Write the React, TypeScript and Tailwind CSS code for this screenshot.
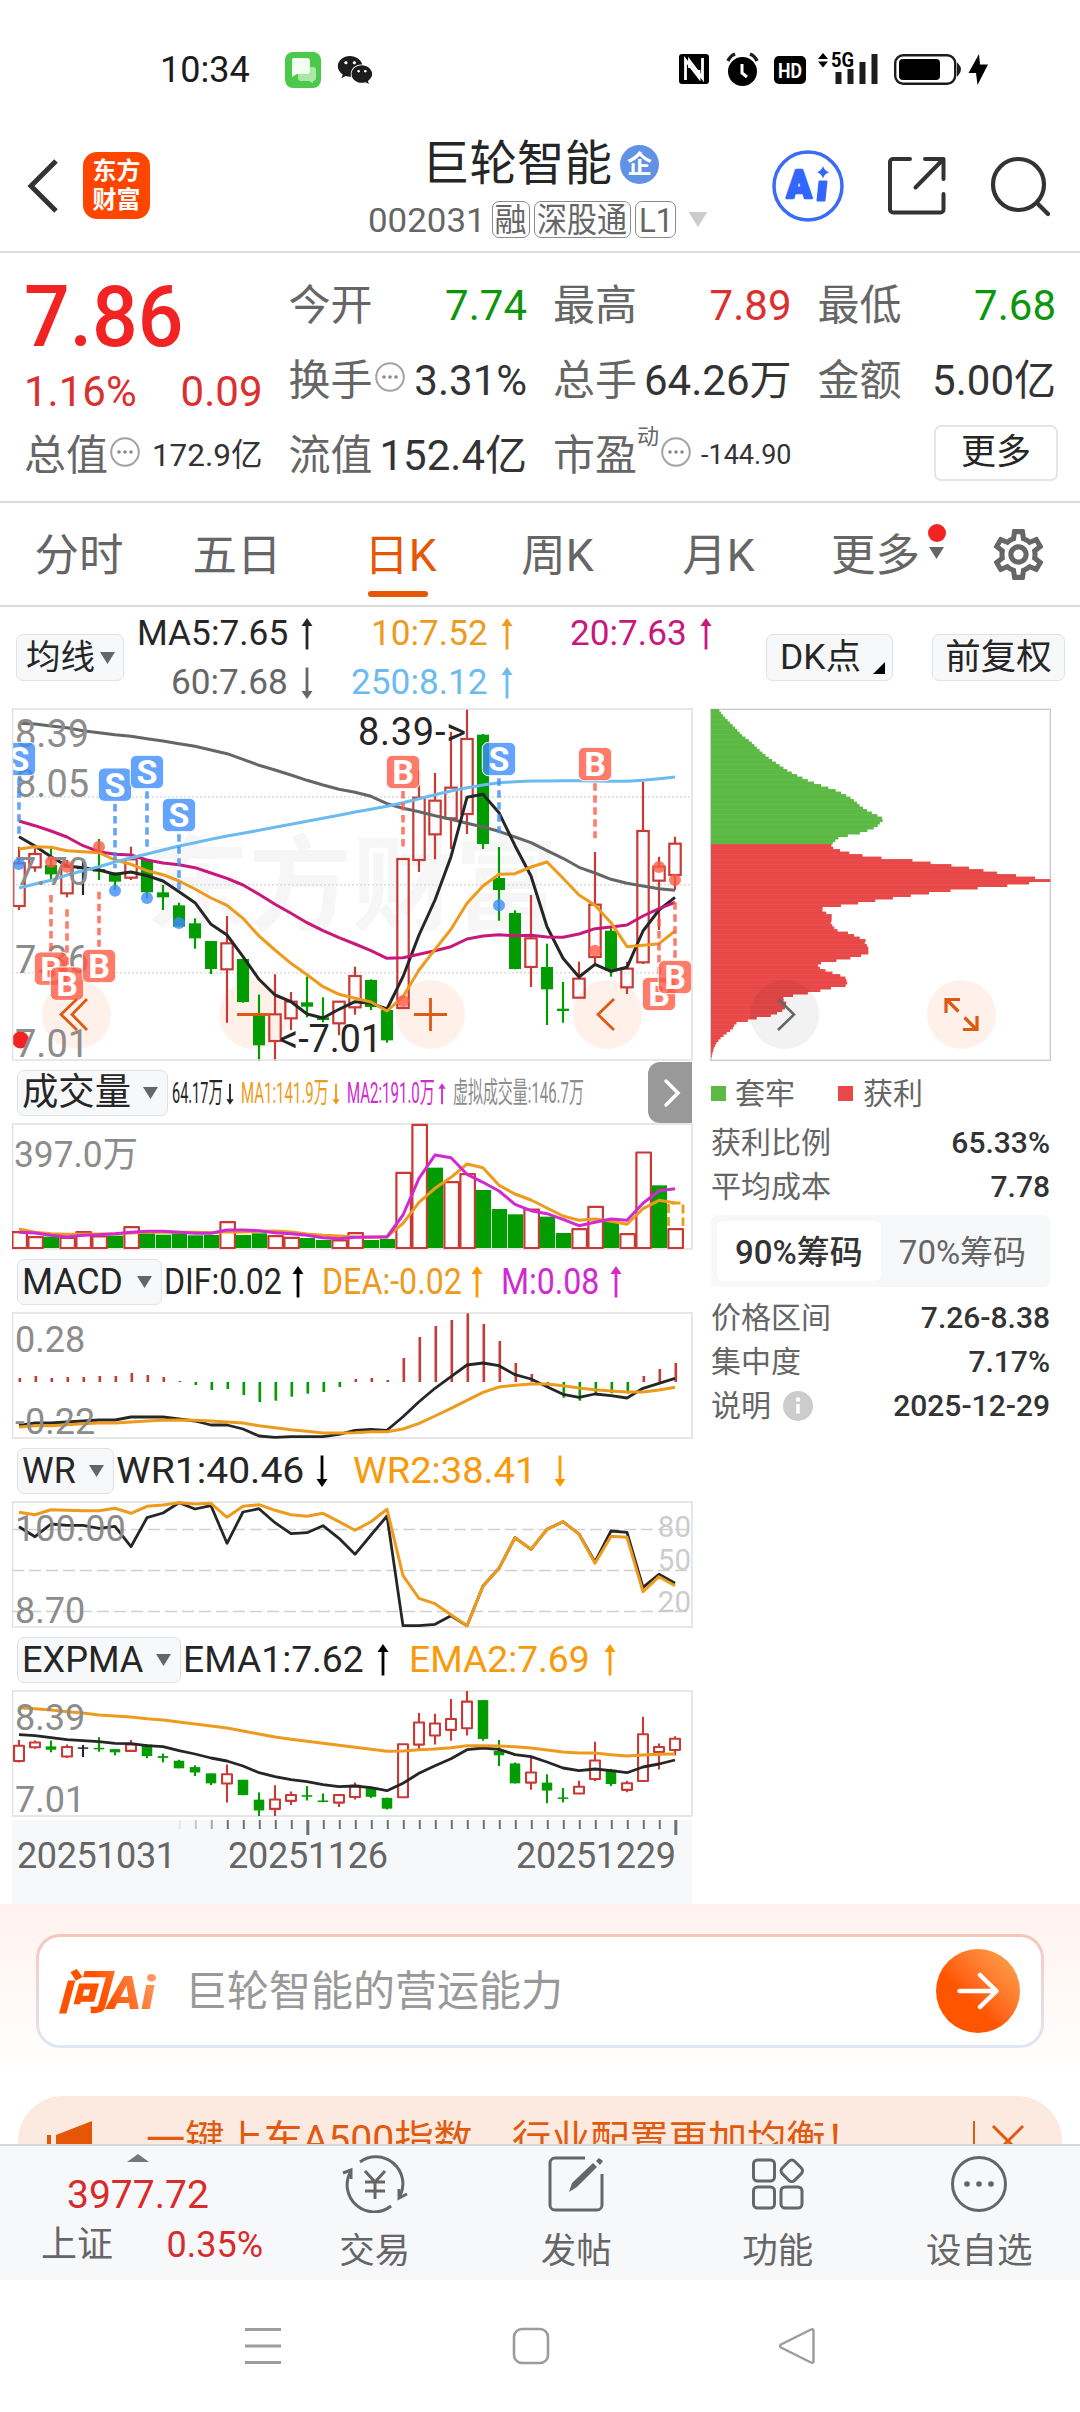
import React, { useLayoutEffect, useRef, useState } from "react";
import { FaWeixin } from "react-icons/fa";
import { MdOutlineSettings } from "react-icons/md";

const FONT = "font-[Roboto,'Noto_Sans_CJK_SC',sans-serif]";

const xs = (i: number) => 19 + i * 16;
const line = (ys: number[], map: (y: number) => number) =>
  ys.map((y, i) => `${xs(i)},${map(y).toFixed(1)}`).join(" ");

/* [colour, high, low, bodyTop, bodyBottom], in thirds of a pixel from y = 700 */
type Candle = [string, number, number, number, number];
const candles: Candle[] = [
  ["R", 440, 630, 490, 618], ["R", 445, 515, 462, 502], ["G", 445, 545, 495, 523], ["R", 480, 592, 500, 580],
  ["K", 483, 585, 503, 507], ["G", 417, 540, 507, 515], ["G", 518, 570, 518, 545], ["R", 440, 540, 478, 533],
  ["G", 480, 595, 480, 577], ["G", 555, 630, 577, 592], ["G", 608, 680, 616, 680], ["G", 655, 746, 670, 715],
  ["G", 723, 822, 723, 807], ["R", 648, 968, 730, 808], ["G", 777, 908, 777, 906], ["G", 884, 1083, 945, 1036],
  ["R", 823, 1083, 943, 1023], ["R", 876, 990, 905, 955], ["G", 830, 952, 907, 920], ["G", 892, 967, 952, 960],
  ["R", 903, 1006, 905, 970], ["R", 800, 944, 828, 922], ["G", 838, 930, 840, 921], ["G", 928, 1028, 930, 1021],
  ["R", 475, 925, 477, 924], ["R", 212, 516, 293, 480], ["R", 219, 478, 302, 403], ["R", 95, 447, 263, 355],
  ["R", 27, 402, 117, 342], ["G", 102, 447, 104, 432], ["G", 441, 662, 534, 570], ["G", 631, 808, 639, 807],
  ["R", 585, 861, 715, 801], ["G", 731, 975, 801, 868], ["G", 846, 968, 926, 933], ["R", 785, 893, 836, 893],
  ["R", 456, 790, 614, 771], ["G", 685, 830, 692, 813], ["R", 785, 882, 806, 862], ["R", 245, 792, 393, 787],
  ["R", 470, 690, 500, 542], ["R", 410, 570, 431, 525],
];
const ma5 = [410, 438, 470, 498, 503, 510, 523, 516, 527, 543, 575, 608, 673, 705, 770, 838, 885, 905, 942, 954, 928, 905, 910, 927, 830, 705, 600, 470, 292, 283, 338, 437, 528, 680, 775, 831, 793, 814, 802, 693, 630, 592];
const ma10 = [447, 440, 442, 452, 455, 458, 480, 493, 512, 524, 543, 567, 594, 616, 655, 708, 750, 790, 824, 860, 883, 895, 906, 933, 890, 810, 748, 688, 610, 558, 523, 521, 501, 486, 535, 585, 616, 668, 740, 736, 731, 693];
const ma20 = [363, 377, 393, 411, 437, 455, 463, 465, 480, 489, 494, 503, 519, 535, 555, 583, 613, 640, 668, 692, 713, 732, 752, 775, 773, 763, 752, 740, 717, 708, 704, 707, 706, 711, 712, 702, 686, 681, 675, 648, 626, 607];
const ma60 = [70, 72, 78, 83, 92, 98, 104, 109, 116, 123, 131, 139, 150, 161, 178, 196, 210, 225, 241, 255, 268, 277, 289, 311, 325, 335, 347, 358, 370, 381, 394, 411, 428, 452, 475, 502, 519, 538, 550, 558, 566, 571];
const ma250 = [564, 552, 541, 525, 512, 500, 486, 473, 462, 450, 438, 428, 418, 408, 400, 391, 382, 373, 364, 355, 346, 336, 328, 319, 308, 296, 284, 273, 263, 255, 248, 245, 243, 243, 242, 242, 243, 244, 244, 241, 236, 231];

const volTop = [515, 530, 530, 532, 515, 528, 527, 500, 520, 524, 520, 526, 525, 485, 525, 520, 527, 532, 534, 540, 540, 518, 540, 537, 337, 193, 323, 365, 341, 390, 447, 463, 447, 470, 519, 506, 439, 486, 521, 276, 376, 506];
const volUp = "RRGRRRGRGGGGGRGGRRGGRRGGRRGRRGGGRGGRRGRRGR";
const vol1 = [507, 517, 521, 523, 523, 522, 522, 519, 516, 517, 517, 517, 518, 515, 516, 514, 513, 516, 522, 526, 528, 531, 532, 530, 490, 427, 385, 352, 312, 323, 376, 402, 420, 444, 468, 481, 477, 484, 493, 446, 421, 429];
const vol2 = [517, 519, 526, 531, 526, 524, 521, 517, 514, 514, 517, 520, 520, 510, 510, 512, 518, 521, 526, 533, 536, 532, 531, 531, 465, 355, 285, 293, 343, 367, 393, 433, 452, 461, 478, 497, 487, 477, 481, 430, 392, 386];
const macd = [954, 948, 954, 951, 951, 948, 948, 939, 945, 951, 963, 975, 990, 987, 1005, 1026, 1022, 1010, 1001, 996, 981, 957, 954, 960, 894, 831, 798, 780, 760, 792, 843, 909, 942, 981, 1013, 1022, 1000, 1000, 1000, 948, 927, 909];
const dif = [1096, 1089, 1089, 1086, 1083, 1080, 1080, 1071, 1071, 1071, 1077, 1083, 1095, 1095, 1107, 1128, 1132, 1130, 1130, 1130, 1123, 1111, 1108, 1111, 1070, 1025, 985, 950, 915, 909, 917, 944, 957, 980, 1003, 1012, 1002, 1007, 1014, 985, 970, 955];
const dea = [1101, 1097, 1097, 1094, 1091, 1089, 1089, 1086, 1083, 1081, 1080, 1081, 1083, 1086, 1089, 1097, 1103, 1109, 1114, 1119, 1119, 1118, 1115, 1115, 1107, 1090, 1068, 1045, 1021, 997, 981, 976, 972, 972, 977, 984, 989, 993, 996, 996, 990, 982];
const wr1 = [260, 290, 252, 256, 256, 265, 259, 320, 233, 219, 188, 207, 197, 310, 216, 206, 248, 281, 278, 257, 295, 343, 285, 228, 557, 557, 553, 527, 557, 438, 385, 293, 328, 268, 245, 282, 366, 273, 277, 442, 403, 430];
const wr2 = [217, 224, 209, 211, 212, 212, 205, 220, 199, 195, 188, 192, 190, 232, 199, 194, 211, 224, 229, 220, 245, 271, 245, 208, 407, 475, 491, 524, 557, 438, 385, 293, 328, 268, 245, 282, 370, 289, 292, 455, 410, 437];
const ema1 = [884, 887, 893, 899, 902, 905, 910, 911, 917, 920, 932, 942, 954, 963, 978, 998, 1010, 1019, 1025, 1034, 1040, 1038, 1043, 1052, 1030, 1000, 977, 956, 929, 924, 928, 944, 950, 966, 984, 992, 987, 992, 998, 981, 972, 960];
const ema2 = [803, 806, 810, 815, 819, 825, 828, 831, 836, 840, 846, 852, 858, 864, 873, 882, 891, 898, 904, 910, 916, 922, 928, 934, 933, 929, 927, 923, 917, 917, 918, 920, 924, 930, 936, 939, 939, 944, 948, 945, 943, 942];

/* Cost distribution outline: [y, x] in thirds of a pixel from (690, 600) */
const chips: [number, number][] = [
  [327, 85], [345, 98], [365, 117], [385, 137], [405, 155], [425, 182], [445, 202], [465, 225], [480, 245], [500, 275], [515, 298],
  [530, 330], [545, 362], [560, 405], [572, 440], [590, 477], [605, 497], [620, 513], [635, 538], [645, 560], [652, 575], [660, 579],
  [668, 570], [680, 560], [690, 535], [698, 512], [705, 478], [712, 447], [720, 437], [732, 425], [740, 423], [747, 437], [757, 470],
  [765, 512], [772, 550], [778, 648], [786, 700], [794, 770], [802, 828], [810, 875], [818, 917], [826, 978], [833, 1032], [841, 1081],
  [849, 1013], [857, 943], [864, 857], [872, 771], [879, 713], [887, 655], [894, 605], [902, 549], [910, 494], [917, 446], [923, 398],
  [933, 397], [940, 412], [945, 425], [960, 425], [970, 422], [980, 430], [990, 438], [997, 470], [1005, 490], [1013, 508], [1020, 527],
  [1030, 524], [1040, 535], [1055, 535], [1062, 535], [1068, 502], [1077, 468], [1083, 425], [1090, 385], [1100, 383], [1108, 398],
  [1115, 418], [1122, 437], [1130, 465], [1145, 471], [1155, 473], [1163, 425], [1172, 387], [1180, 346], [1187, 303], [1195, 275],
  [1210, 290], [1228, 283], [1237, 265], [1247, 240], [1253, 202], [1262, 170], [1268, 140], [1275, 133], [1285, 128], [1300, 108],
  [1315, 90], [1330, 78], [1345, 71], [1372, 64], [1382, 62],
];
function chipAt(y: number) {
  for (let i = 1; i < chips.length; i++) {
    if (y <= chips[i][0]) {
      const [y0, x0] = chips[i - 1];
      const [y1, x1] = chips[i];
      return x0 + ((x1 - x0) * (y - y0)) / (y1 - y0);
    }
  }
  return 62;
}
const chipBars = Array.from({ length: 140 }, (_, i) => {
  const y = 331 + i * 7.5;
  return { y: 600 + (y - 3.75) / 3, x: 690 + chipAt(y) / 3, green: y < 732 };
});

const RED = "#c93a36";
const GREEN = "#009c00";
const INK = "#262626";
const ORANGE = "#ee9a1c";

/* Text drawn at a fixed width, condensed or widened to suit. */
function Fit({ w, children, className = "" }: { w: number; children: React.ReactNode; className?: string }) {
  const ref = useRef<HTMLSpanElement>(null);
  const [k, setK] = useState(1);
  useLayoutEffect(() => {
    if (ref.current) setK(w / ref.current.offsetWidth);
  }, [w]);
  return (
    <span className={`inline-block whitespace-nowrap ${className}`} style={{ width: w }}>
      <span ref={ref} className="inline-block origin-left" style={{ transform: `scaleX(${k})` }}>
        {children}
      </span>
    </span>
  );
}

function Arrow({ down = false, className = "" }: { down?: boolean; className?: string }) {
  return (
    <svg width="12" height="34" viewBox="0 0 12 34" className={`shrink-0 ${down ? "rotate-180" : ""} ${className}`}>
      <path d="M6 5V32.500" stroke="currentColor" strokeWidth="2.800" />
      <path d="M0.500 9L6 1L11.500 9Z" fill="currentColor" />
    </svg>
  );
}

function Caret({ className = "" }: { className?: string }) {
  return (
    <svg width="15" height="12" viewBox="0 0 15 12" className={className}>
      <path d="M0 0H15L7.500 12Z" fill="currentColor" />
    </svg>
  );
}

function MoreDots({ className = "" }: { className?: string }) {
  return (
    <svg width="30" height="30" viewBox="0 0 30 30" className={`shrink-0 ${className}`}>
      <circle cx="15" cy="15" r="13.800" fill="none" stroke="#a3a3a3" strokeWidth="2" />
      <g fill="#8a8a8a">
        <circle cx="9" cy="15" r="1.800" />
        <circle cx="15" cy="15" r="1.800" />
        <circle cx="21" cy="15" r="1.800" />
      </g>
    </svg>
  );
}

function StatusBar() {
  return (
    <div className="flex h-[140px] shrink-0 items-center pl-[160px] text-[#1c1c1c]">
      <span className="w-[125px] text-[36px] leading-none">10:34</span>
      <svg width="36" height="36" viewBox="0 0 36 36">
        <rect width="36" height="36" rx="8" fill="#4cc94a" />
        <path d="M13 15h15a3 3 0 0 1 3 3v8a3 3 0 0 1-3 3v2l-4-2h-8a3 3 0 0 1-3-3z" fill="#a9e8a6" />
        <path d="M8 6h14a3 3 0 0 1 3 3v10a3 3 0 0 1-3 3H12l-5 3V9a3 3 0 0 1 1-3z" fill="#f2fff0" />
      </svg>
      <FaWeixin className="ml-[16px] h-[38px] w-[36px]" />
      <svg width="310" height="36" viewBox="679 52 310 36" className="ml-[306px]">
        <rect x="679" y="54" width="30" height="30" rx="3" />
        <path d="M685.500 80V60L699 77.500V70" fill="none" stroke="#fff" strokeWidth="2.800" />
        <path d="M702.500 58V78L689.500 61V68" fill="none" stroke="#fff" strokeWidth="2.800" />
        <circle cx="742.500" cy="71.500" r="14.500" />
        <path d="M742 64v9l5 4" fill="none" stroke="#fff" strokeWidth="3" />
        <path d="M728 61q2-5 7-7M757 61q-2-5-7-7" fill="none" stroke="#1c1c1c" strokeWidth="3.500" />
        <rect x="774" y="56" width="32" height="28" rx="5" />
        <text x="790" y="77.500" textAnchor="middle" className="font-[Roboto]" fontSize="21" fontWeight="700" fill="#fff" textLength="24" lengthAdjust="spacingAndGlyphs">HD</text>
        <path d="M818 59l5-6 5 6zM818 61.500l5 6 5-6z" />
        <text x="831" y="67" className="font-[Roboto]" fontSize="20" fontWeight="700" textLength="23" lengthAdjust="spacingAndGlyphs">5G</text>
        <path d="M838.500 72V84M850.500 69V84M862.500 62V84M874.500 54V84" stroke="#1c1c1c" strokeWidth="6" />
        <rect x="895.200" y="55.200" width="60" height="28.500" rx="8" fill="none" stroke="#1c1c1c" strokeWidth="2.400" />
        <rect x="899" y="59" width="41" height="21" rx="4" />
        <path d="M958 65q4 4.500 0 9z" stroke="#1c1c1c" strokeWidth="2" />
        <path d="M979 54L968.500 73h7.500l1.500 12L988 64.500h-8z" />
      </svg>
    </div>
  );
}

function Header() {
  const tag = "flex h-[37px] items-center justify-center rounded-[7px] border-[1.500px] border-[#8a8a8a] leading-none";
  return (
    <div className="flex h-[113px] shrink-0 items-center border-b-2 border-[#dcdcdc] pr-[28px] pl-[27px]">
      <svg width="32" height="54" viewBox="0 0 32 54" className="-mt-[20px]">
        <path d="M29 2L4 27L29 52" fill="none" stroke="#333" strokeWidth="5" />
      </svg>
      <div className="-mt-[20px] ml-[24px] flex h-[67px] w-[67px] flex-col items-center justify-center rounded-[14px] bg-[#ff4500] text-[24px] leading-[29px] font-bold text-white">
        <span>东方</span>
        <span>财富</span>
      </div>
      <div className="ml-[218px] flex w-[341px] flex-col self-stretch">
        <div className="flex h-[48px] items-center pl-[54px] text-[47.500px] leading-none text-[#262626]">
          <span className="pt-[1px]">巨轮智能</span>
          <span className="ml-[8px] flex h-[39px] w-[39px] items-center justify-center rounded-full bg-[#6292e6] text-[25px] leading-none font-bold text-white">
            企
          </span>
        </div>
        <div className="mt-[12px] flex h-[39px] items-center text-[34px] leading-none text-[#666]">
          <Fit w={118}>002031</Fit>
          <span className={`${tag} ml-[6px] w-[38px] text-[32px]`}>融</span>
          <span className={`${tag} ml-[4px] w-[98px]`}><Fit w={90}>深股通</Fit></span>
          <span className={`${tag} ml-[4px] w-[41px]`}><Fit w={34}>L1</Fit></span>
          <Caret className="ml-[11px] h-[15px] w-[22px] text-[#ccc]" />
        </div>
      </div>
      <svg width="72" height="72" viewBox="0 0 72 72" className="-mt-[20px] ml-[63px]">
        <circle cx="36" cy="36" r="34" fill="none" stroke="#3a6cf4" strokeWidth="3.500" />
        <text x="14.500" y="47.500" className="font-[Roboto]" fontSize="38" fontWeight="900" fill="#3366ff" stroke="#3366ff" strokeWidth="2.500" strokeLinejoin="round" textLength="25" lengthAdjust="spacingAndGlyphs">A</text>
        <path d="M47.500 31.500H54.500L52.500 50.500H45.500Z" fill="#3366ff" stroke="#3366ff" strokeWidth="2" strokeLinejoin="round" />
        <path d="M51 16q1.500 5 6 6.200q-4.500 1.500-6 6.300q-1.500-5-6-6.300q4.500-1.400 6-6.200z" fill="#3366ff" />
      </svg>
      <svg width="60" height="60" viewBox="0 0 60 60" className="-mt-[19px] ml-[43px]" fill="none" stroke="#333" strokeWidth="4" strokeLinecap="round" strokeLinejoin="round">
        <path d="M23 3H6a3 3 0 0 0-3 3V53.500a3 3 0 0 0 3 3H53.500a3 3 0 0 0 3-3V38" />
        <path d="M38 3H56.500V23M56 3.500L28.500 31.500" />
      </svg>
      <svg width="62" height="62" viewBox="0 0 62 62" className="-mt-[18px] ml-[43px]" fill="none" stroke="#333" strokeWidth="4.200">
        <circle cx="28.500" cy="28.500" r="25.500" />
        <path d="M47 47L58 58" strokeLinecap="round" />
      </svg>
    </div>
  );
}

function Stat({ label, value, color = "text-[#333]", children }: { label: string; value: string; color?: string; children?: React.ReactNode }) {
  return (
    <div className="flex h-[75px] items-center">
      <span className="text-[#666]">{label}</span>
      {children}
      <span className={`ml-auto ${color}`}>{value}</span>
    </div>
  );
}

function Quote() {
  return (
    <div className="h-[250px] shrink-0 border-b-2 border-[#dcdcdc] pr-[24px] pl-[24px] pt-[15px] text-[42px] leading-none whitespace-nowrap">
      <div className="grid grid-cols-4 gap-x-[26px]">
        <div className="row-span-2 flex flex-col text-[#f12323]">
          <span className="mt-[7px] text-[85px] font-medium"><Fit w={160}>7.86</Fit></span>
          <span className="mt-[11px] flex justify-between text-[#dc3030]">
            <span>1.16%</span>
            <span>0.09</span>
          </span>
        </div>
        <Stat label="今开" value="7.74" color="text-[#0c960c]" />
        <Stat label="最高" value="7.89" color="text-[#dc3030]" />
        <Stat label="最低" value="7.68" color="text-[#0c960c]" />
        <Stat label="换手" value="3.31%"><MoreDots className="-mt-[7px] ml-[2px]" /></Stat>
        <Stat label="总手" value="64.26万" />
        <Stat label="金额" value="5.00亿" />
        <div className="flex h-[75px] items-center">
          <span className="text-[#666]">总值</span>
          <MoreDots className="-mt-[7px] ml-[2px]" />
          <span className="ml-auto text-[31.500px] text-[#333]">172.9亿</span>
        </div>
        <Stat label="流值" value="152.4亿" />
        <div className="flex h-[75px] items-center">
          <span className="text-[#666]">市盈</span>
          <span className="-mt-[38px] text-[22px] text-[#666]">动</span>
          <MoreDots className="-mt-[7px] ml-[2px]" />
          <span className="ml-auto text-[27px] text-[#333]">-144.90</span>
        </div>
        <div className="flex h-[75px] items-center justify-end">
          <span className="-mt-[6px] -mr-[2px] flex h-[56px] w-[124px] items-center justify-center rounded-[7px] border-2 border-[#e6e6e6] text-[35px] text-[#262626]">
            更多
          </span>
        </div>
      </div>
    </div>
  );
}

function Tabs() {
  return (
    <div className="flex h-[104px] shrink-0 items-center border-b-2 border-[#dcdcdc] text-[44.500px] leading-none whitespace-nowrap text-[#666]">
      <span className="mt-[5px] w-[158px] text-center">分时</span>
      <span className="mt-[5px] w-[158px] text-center">五日</span>
      <span className="relative mt-[5px] w-[169px] text-center text-[#e55606]">
        日K
        <span className="absolute top-[57px] left-[52px] h-[6px] w-[60px] rounded-full bg-[#e55606]" />
      </span>
      <span className="mt-[5px] w-[145px] text-center">周K</span>
      <span className="mt-[5px] w-[177px] text-center">月K</span>
      <span className="relative mt-[5px] ml-[24px] w-[162px]">
        更多
        <span className="absolute -top-[10px] left-[97px] h-[18px] w-[18px] rounded-full bg-[#f12323]" />
        <Caret className="absolute top-[13px] left-[98px]" />
      </span>
      <MdOutlineSettings className="-ml-[5px] h-[61px] w-[61px]" />
    </div>
  );
}

const chip = "flex shrink-0 items-center rounded-[7px] border-[1.500px] border-[#dfe2e7] bg-[#f7f8fa] text-[#262626] leading-none whitespace-nowrap";

function Averages() {
  const cell = "flex items-center justify-end gap-[13px]";
  return (
    <div className="flex h-[102px] shrink-0 items-start pt-[11px] pl-[16px] text-[35.500px] leading-none">
      <div className={`${chip} mt-[16px] h-[47px] w-[108px] pl-[9px] text-[34.500px]`}>
        均线<Caret className="ml-[5px] text-[#666]" />
      </div>
      <div className="grid h-[98px] w-[588px] grid-cols-[189px_200px_199px] grid-rows-[32px_48px] items-center whitespace-nowrap">
        <span className={`${cell} text-[#262626]`}><Fit w={151}>MA5:7.65</Fit><Arrow /></span>
        <span className={`${cell} text-[#ee9a1c]`}><Fit w={117}>10:7.52</Fit><Arrow /></span>
        <span className={`${cell} text-[#c8187c]`}><Fit w={117}>20:7.63</Fit><Arrow /></span>
        <span className={`${cell} pt-[18px] text-[#666]`}><Fit w={117}>60:7.68</Fit><Arrow down /></span>
        <span className={`${cell} pt-[18px] text-[#6cbbf0]`}><Fit w={137}>250:8.12</Fit><Arrow /></span>
      </div>
      <div className={`${chip} mt-[16px] ml-[54px] h-[47px] w-[127px] pl-[13px] text-[35.500px]`}>
        DK点
        <svg width="12" height="12" viewBox="0 0 12 12" className="mt-[20px] ml-[12px]"><path d="M12 0V12H0Z" /></svg>
      </div>
      <div className={`${chip} mt-[16px] ml-[39px] h-[47px] w-[133px] justify-center text-[35.500px]`}>前复权</div>
    </div>
  );
}

const gy = (y: number) => 700 + y / 3;

function Candles({ map, w, sw }: { map: (y: number) => number; w: number; sw: number }) {
  return (
    <>
      {candles.map(([c, hi, lo, top, bot], i) => {
        const x = xs(i);
        const col = c === "R" ? RED : c === "G" ? GREEN : INK;
        const t = map(top);
        const b = map(bot);
        return (
          <g key={i} stroke={col} strokeWidth={sw} fill={col}>
            {c === "R" ? (
              <>
                <path d={`M${x} ${map(hi)}V${t}M${x} ${b}V${Math.max(b, map(lo))}`} />
                <rect x={x - w / 2 + 0.8} y={t} width={w - 1.6} height={Math.max(2, b - t)} fill="none" />
              </>
            ) : (
              <>
                <path d={`M${x} ${map(hi)}V${map(lo)}`} />
                <rect x={x - w / 2 + 0.5} y={t} width={w - 1} height={Math.max(1.5, b - t)} stroke="none" />
              </>
            )}
          </g>
        );
      })}
    </>
  );
}

/* [index, centre of tag, dash start, dash end, marker dot] */
const sells = [[0, 177, 235, 402, 492], [6, 254, 312, 505, 572], [8, 216, 274, 440, 594], [10, 345, 403, 570, 669], [30, 177, 235, 400, 616]];
const buys = [[2, 806, 585, 750, 486], [3, 851, 628, 795, 500], [5, 798, 575, 740, 440], [24, 216, 273, 440, 903], [36, 192, 250, 415, 752], [40, 882, 657, 828, 501], [41, 831, 607, 775, 540]];

function Signal({ d, kind }: { d: number[]; kind: "B" | "S" }) {
  const x = xs(d[0]);
  const col = kind === "B" ? "#ff5a45" : "#3d8dfb";
  return (
    <g>
      <path d={`M${x} ${gy(d[2])}V${gy(d[3])}`} stroke={col} strokeOpacity="0.8" strokeWidth="3.600" strokeDasharray="7.500 4.500" />
      <circle cx={x} cy={gy(d[4])} r="6" fill={col} fillOpacity="0.8" />
      <rect x={x - 16.7} y={gy(d[1]) - 16.7} width="33.400" height="33.400" rx="6" fill={col} fillOpacity="0.8" stroke="#fff" strokeWidth="1" />
      <text x={x} y={gy(d[1]) + 12} textAnchor="middle" fontSize="34" fontWeight="700" fill="#fff">{kind}</text>
    </g>
  );
}

function PriceChart() {
  return (
    <svg width="681" height="353" viewBox="12 708 681 353" className={FONT} fill="none">
      <g fontWeight="700" fontSize="103" fill="#f6f6f6">
        <text x="146" y="922">东方财富</text>
      </g>
      <path d="M12 797H692M12 884.700H692M12 972.700H692" stroke="#dcdcdc" strokeWidth="1.500" strokeDasharray="2 2" />
      <g fill="#fff1ea">
        <circle cx="76.500" cy="1014.500" r="34.500" />
        <circle cx="253.500" cy="1014.500" r="34.500" />
        <circle cx="430.500" cy="1014.500" r="34.500" />
        <circle cx="607.500" cy="1014.500" r="34.500" />
      </g>
      <Candles map={gy} w={13} sw={2.2} />
      <g strokeWidth="3" strokeLinejoin="round">
        <polyline points={line(ma60, gy)} stroke="#666" />
        <polyline points={line(ma5, gy)} stroke={INK} />
        <polyline points={line(ma20, gy)} stroke="#c8187c" />
        <polyline points={line(ma10, gy)} stroke={ORANGE} />
        <polyline points={line(ma250, gy)} stroke="#6cbbf0" />
      </g>
      <circle cx="20.500" cy="1040" r="8.500" fill="#f12323" />
      <g fill="#8c8c8c" fontSize="38">
        <text x="15" y="747">8.39</text>
        <text x="15" y="797">8.05</text>
        <text x="15" y="885">7.70</text>
        <text x="15" y="973">7.36</text>
        <text x="15" y="1057">7.01</text>
      </g>
      {buys.map((d) => <Signal key={`b${d[0]}`} d={d} kind="B" />)}
      {sells.map((d) => <Signal key={`s${d[0]}`} d={d} kind="S" />)}
      <g fill={INK} fontSize="38">
        <text x="358" y="745" textLength="108">8.39-&gt;</text>
        <text x="279" y="1052" textLength="103">&lt;-7.01</text>
      </g>
      <g stroke="#dd5a12" strokeWidth="2.800">
        <path d="M77 999L61 1014.500L77 1030M87 999L72 1014.500L87 1030" />
        <path d="M237 1014.500H270M414 1014.500H447M430.500 998V1031" />
        <path d="M614 999L598 1014.500L614 1030" />
      </g>
      <rect x="12.500" y="709" width="679.500" height="351" stroke="#e0e0e0" strokeWidth="1.500" />
    </svg>
  );
}

function DistributionChart() {
  return (
    <svg width="341" height="353" viewBox="710 708 341 353" fill="none">
      <rect x="710.800" y="709.300" width="339.500" height="351" stroke="#c8c8c8" strokeWidth="1.300" />
      {chipBars.map((b, i) => (
        <rect key={i} x="711" y={b.y} width={Math.max(0, b.x - 711)} height="2.900" fill={b.green ? "#5cb944" : "#e84848"} />
      ))}
      <circle cx="784.700" cy="1014.500" r="34.500" fill="#000" fillOpacity="0.05" />
      <circle cx="961.500" cy="1014.500" r="34.500" fill="#fff1ea" />
      <path d="M778 999L794 1014.500L778 1030" stroke="#666" strokeWidth="2.600" />
      <path d="M946 1013V999.500H960M947 1000L958.500 1011.500M977 1016V1029.500H963M976 1029L964.500 1017.500" stroke="#dd5a12" strokeWidth="3.200" />
    </svg>
  );
}

const sy = (y: number) => 1060 + y / 3;
const wy = (y: number) => 1440 + y / 3;
const ey = (y: number) => 1691 + ((y - 27) / 1056) * 125;

function Frame({ top, children }: { top: number; children: React.ReactNode }) {
  return (
    <svg width="681" height="127" viewBox={`12 ${top - 1} 681 127`} className={FONT} fill="none" strokeLinejoin="round">
      <rect x="12.500" y={top} width="679.500" height="125" stroke="#e0e0e0" strokeWidth="1.500" />
      {children}
    </svg>
  );
}

function VolumeChart() {
  return (
    <Frame top={1124}>
      <text x="14" y="1167" fontSize="36" fill="#8c8c8c" textLength="124" lengthAdjust="spacingAndGlyphs">397.0万</text>
      {volTop.map((v, i) =>
        volUp[i] === "R" ? (
          <rect key={i} x={xs(i) - 6.6} y={sy(v) + 0.5} width="14.500" height={1248 - sy(v) - 0.5} stroke={RED} strokeWidth="2.200" />
        ) : (
          <rect key={i} x={xs(i) - 7.2} y={sy(v)} width="15.200" height={1248 - sy(v)} fill={GREEN} />
        ),
      )}
      <path d="M668.500 1226V1203H683V1226" stroke={ORANGE} strokeWidth="2.800" strokeDasharray="9 4" />
      <polyline points={line(vol1, sy)} stroke={ORANGE} strokeWidth="3" />
      <polyline points={line(vol2, sy)} stroke="#d02ad0" strokeWidth="3" />
    </Frame>
  );
}

function MacdChart() {
  return (
    <Frame top={1313}>
      {macd.map((v, i) => (
        <path key={i} d={`M${xs(i) + 0.8} ${sy(966)}V${sy(v)}`} stroke={v < 966 ? RED : GREEN} strokeWidth="2.600" />
      ))}
      <polyline points={line(dif, sy)} stroke={INK} strokeWidth="2.800" />
      <polyline points={line(dea, sy)} stroke={ORANGE} strokeWidth="3" />
      <g fill="#8c8c8c" fontSize="36">
        <text x="15" y="1352">0.28</text>
        <text x="15" y="1434">-0.22</text>
      </g>
    </Frame>
  );
}

function WrChart() {
  return (
    <Frame top={1502}>
      <path d="M12 1529.500H692M12 1570.500H692M12 1611.500H692" stroke="#d0d0d0" strokeWidth="1.400" strokeDasharray="12 5" />
      <polyline points={line(wr1, wy)} stroke={INK} strokeWidth="2.800" />
      <polyline points={line(wr2, wy)} stroke={ORANGE} strokeWidth="3" />
      <g fill="#8c8c8c" fontSize="36">
        <text x="15" y="1541">100.00</text>
        <text x="15" y="1623">8.70</text>
      </g>
      <g fill="#ccc" fontSize="29.500" textAnchor="end">
        <text x="691" y="1537">80</text>
        <text x="691" y="1569.500">50</text>
        <text x="691" y="1612">20</text>
      </g>
    </Frame>
  );
}

function ExpmaChart() {
  return (
    <Frame top={1691}>
      <Candles map={ey} w={11.5} sw={2.1} />
      <polyline points={line(ema1, wy)} stroke={INK} strokeWidth="2.800" />
      <polyline points={line(ema2, wy)} stroke={ORANGE} strokeWidth="3" />
      <g fill="#8c8c8c" fontSize="36">
        <text x="15" y="1730">8.39</text>
        <text x="15" y="1812">7.01</text>
      </g>
    </Frame>
  );
}

function IndicatorHead({ name, nw, cw, children }: { name: string; nw: number; cw: string; children: React.ReactNode }) {
  return (
    <div className="flex h-[62px] items-center pt-[1px] pl-[5px] text-[37px] leading-none">
      <div className={`${chip} h-[46px] ${cw} justify-between pr-[9px] pl-[4px]`}>
        <Fit w={nw}>{name}</Fit>
        <Caret className="text-[#666]" />
      </div>
      {children}
    </div>
  );
}

function Timeline() {
  return (
    <div className="mt-[3px] h-[84px] w-[680px] bg-[#f7f8fa]">
      <svg width="680" height="84" viewBox="12 1820 680 84" className={FONT}>
        {Array.from({ length: 32 }, (_, k) => k + 10).map((i) => {
          const long = i === 18 || i === 41;
          const x = xs(i) + 0.8;
          return (
            <path key={i} d={`M${x} 1820V${long ? 1835 : 1829}`} stroke="#707070" strokeWidth={long ? 3 : 2} opacity={i < 13 ? [0.12, 0.35, 0.6][i - 10] : 1} />
          );
        })}
        <g fill="#666" fontSize="36">
          <text x="17" y="1868" textLength="159">20251031</text>
          <text x="228" y="1868" textLength="160">20251126</text>
          <text x="516" y="1868" textLength="160">20251229</text>
        </g>
      </svg>
    </div>
  );
}

function CostRow({ label, value, children }: { label: string; value: string; children?: React.ReactNode }) {
  return (
    <div className="flex h-[44px] items-center">
      <span>{label}</span>
      {children}
      <span className="ml-auto text-[30px] font-medium text-[#333]">{value}</span>
    </div>
  );
}

function CostPanel() {
  return (
    <div className="w-[340px] text-[30px] leading-none text-[#666]">
      <DistributionChart />
      <div className="mt-[8px] flex h-[48px] items-center pl-[1px]">
        <span className="h-[15px] w-[15px] bg-[#5cb944]" />
        <span className="ml-[9px] pt-[1px]">套牢</span>
        <span className="ml-[43px] h-[15px] w-[15px] bg-[#e84848]" />
        <span className="ml-[10px] pt-[1px]">获利</span>
      </div>
      <div className="pt-[4px] pl-[1px]">
        <CostRow label="获利比例" value="65.33%" />
        <CostRow label="平均成本" value="7.78" />
        <div className="mt-[6px] mb-[9px] flex h-[72px] rounded-[6px] bg-[#f7f8fa] p-[6px] text-[33px]">
          <span className="flex w-[164px] items-center justify-center rounded-[6px] bg-white pt-[2px] font-medium text-[#333]">
            <Fit w={128}>90%筹码</Fit>
          </span>
          <span className="flex flex-1 items-center justify-center pt-[2px]">70%筹码</span>
        </div>
        <CostRow label="价格区间" value="7.26-8.38" />
        <CostRow label="集中度" value="7.17%" />
        <CostRow label="说明" value="2025-12-29">
          <svg width="30" height="30" viewBox="0 0 30 30" className="ml-[12px]">
            <circle cx="15" cy="15" r="15" fill="#ccc" />
            <circle cx="15" cy="8.500" r="2.200" fill="#fff" />
            <path d="M15 13V22.500" stroke="#fff" strokeWidth="3.400" />
          </svg>
        </CostRow>
      </div>
    </div>
  );
}

function Charts() {
  return (
    <div className="flex h-[1195px] shrink-0 items-start pl-[12px]">
      <div className="-mt-px flex w-[681px] flex-col">
        <PriceChart />
        <div className="relative h-[62px]">
          <IndicatorHead name="成交量" nw={109} cw="w-[151px]">
            <span className="flex items-center pt-[2px] text-[29px]">
              <Fit w={51} className="ml-[4px] text-[#262626]">64.17万</Fit>
              <Arrow down className="ml-[3px] h-[28px] w-[8px] text-[#262626]" />
              <Fit w={88} className="ml-[7px] text-[#ee9a1c]">MA1:141.9万</Fit>
              <Arrow down className="ml-[3px] h-[28px] w-[8px] text-[#ee9a1c]" />
              <Fit w={88} className="ml-[7px] text-[#d02ad0]">MA2:191.0万</Fit>
              <Arrow className="ml-[3px] h-[28px] w-[8px] text-[#d02ad0]" />
              <Fit w={131} className="ml-[7px] text-[#8c8c8c]">虚拟成交量:146.7万</Fit>
            </span>
          </IndicatorHead>
          <div className="absolute top-[1px] right-px flex h-[61px] w-[44px] items-center justify-center rounded-l-[12px] bg-[#999]">
            <svg width="18" height="30" viewBox="0 0 18 30" className="ml-[4px]">
              <path d="M3 3L15 15L3 27" fill="none" stroke="#fff" strokeWidth="3.500" strokeLinecap="round" />
            </svg>
          </div>
        </div>
        <VolumeChart />
        <IndicatorHead name="MACD" nw={101} cw="w-[145px]">
          <Fit w={118} className="ml-[2px] text-[#262626]">DIF:0.02</Fit><Arrow className="ml-[10px]" />
          <Fit w={140} className="ml-[18px] text-[#ee9a1c]">DEA:-0.02</Fit><Arrow className="ml-[9px] text-[#ff9900]" />
          <Fit w={98} className="ml-[18px] text-[#d02ad0]">M:0.08</Fit><Arrow className="ml-[11px] text-[#d02ad0]" />
        </IndicatorHead>
        <MacdChart />
        <IndicatorHead name="WR" nw={54} cw="w-[97px]">
          <Fit w={188} className="ml-[2px] text-[#262626]">WR1:40.46</Fit><Arrow down className="ml-[12px]" />
          <Fit w={183} className="ml-[25px] text-[#f99a0c]">WR2:38.41</Fit><Arrow down className="ml-[18px] text-[#ff9900]" />
        </IndicatorHead>
        <WrChart />
        <IndicatorHead name="EXPMA" nw={121} cw="w-[164px]">
          <Fit w={181} className="ml-[2px] text-[#262626]">EMA1:7.62</Fit><Arrow className="ml-[13px]" />
          <Fit w={181} className="ml-[20px] text-[#f99a0c]">EMA2:7.69</Fit><Arrow className="ml-[14px] text-[#ff9900]" />
        </IndicatorHead>
        <ExpmaChart />
        <Timeline />
      </div>
      <div className="-mt-px ml-[17px]">
        <CostPanel />
      </div>
    </div>
  );
}

function AskBar() {
  return (
    <div className="flex h-[240px] shrink-0 flex-col bg-linear-to-b from-[#fff2ee] to-white to-75% px-[18px]">
      <div className="mx-[18px] mt-[30px] h-[114px] shrink-0 rounded-[24px] bg-linear-to-b from-[#f7c5bd] to-[#dfe7f4] p-[3px]">
        <div className="flex h-full items-center rounded-[21px] bg-white pr-[21px] pl-[18px]">
          <svg width="102" height="50" viewBox="0 0 102 50" className={FONT}>
            <defs>
              <linearGradient id="ask" x1="0" x2="1" y1="0.6" y2="0.3">
                <stop offset="0.450" stopColor="#ff5200" />
                <stop offset="1" stopColor="#ff9a62" />
              </linearGradient>
            </defs>
            <text x="0" y="43" fontSize="47" fontWeight="900" fontStyle="italic" fill="url(#ask)" textLength="98" lengthAdjust="spacingAndGlyphs">问Ai</text>
          </svg>
          <span className="ml-[26px] pt-[2px] text-[42px] leading-none text-[#999]">巨轮智能的营运能力</span>
          <span className="ml-auto flex h-[84px] w-[84px] items-center justify-center rounded-full bg-linear-to-bl from-[#ff9c46] from-10% to-[#ff5500] to-60%">
            <svg width="42" height="38" viewBox="0 0 42 38" fill="none" stroke="#fff" strokeWidth="4.500" strokeLinecap="round" strokeLinejoin="round">
              <path d="M2.500 19H39M23 3L39.500 19L23 35" />
            </svg>
          </span>
        </div>
      </div>
      <div className="mt-[48px] h-[48px] overflow-hidden">
        <div className="flex h-[90px] items-center rounded-[45px] bg-[#fceae0] pr-[37px] pl-[28px] text-[#e05a10]">
          <svg width="48" height="44" viewBox="0 0 48 44" fill="#e55606">
            <path d="M1 16H5V44H1ZM10 16L46 2V44H10Z" />
          </svg>
          <span className="ml-[52px] text-[39.200px] leading-none whitespace-nowrap">一键上车A500指数，行业配置更加均衡！</span>
          <span className="ml-auto h-[40px] w-[2px] bg-[#e05a10]" />
          <svg width="34" height="34" viewBox="0 0 34 34" className="ml-[16px]">
            <path d="M2 2L32 32M32 2L2 32" stroke="#e05a10" strokeWidth="3" />
          </svg>
        </div>
      </div>
    </div>
  );
}

function NavItem({ label, children }: { label: string; children: React.ReactNode }) {
  return (
    <div className="flex w-[201.500px] flex-col items-center text-[35.500px] leading-none text-[#666]">
      <svg width="66" height="58" viewBox="0 0 66 58" className="mt-[9px]" fill="none" stroke="#666" strokeWidth="3">
        {children}
      </svg>
      <span className="mt-[21px]">{label}</span>
    </div>
  );
}

function BottomBar() {
  return (
    <div className="flex h-[136px] shrink-0 border-t-2 border-[#d6d6d6] bg-[#f7f8fa] pl-[41px] leading-none">
      <div className="w-[233px] text-[#d92b2b]">
        <svg width="22" height="8" viewBox="0 0 22 8" className="mt-[8px] ml-[86px] block"><path d="M0 8L11 0L22 8Z" fill="#777" /></svg>
        <div className="mt-[14px] ml-[26px] text-[39px]">3977.72</div>
        <div className="mt-[12px] flex w-[222px] justify-between text-[36px]">
          <span className="text-[#666]">上证</span>
          <span>0.35%</span>
        </div>
      </div>
      <NavItem label="交易">
        <path d="M18 7A27 27 0 0 1 58 41M49 51A27 27 0 0 1 9 16" />
        <path d="M1 18L9 15V24M65 39L57 43V34" />
        <path d="M23 16L33 27L43 16M33 27V44M23 27H43M23 36H43" />
      </NavItem>
      <NavItem label="发帖">
        <path d="M42 3H12A5 5 0 0 0 7 8V50A5 5 0 0 0 12 55H54A5 5 0 0 0 59 50V19" />
        <path d="M26 37L29 28L50 8L54 12L34 32Z" fill="#666" stroke="none" />
        <path d="M53 6L56 3L60 6L57 10Z" fill="#666" stroke="none" />
      </NavItem>
      <NavItem label="功能">
        <rect x="8.500" y="5" width="21" height="21" rx="4" />
        <rect x="8.500" y="32" width="21" height="21" rx="4" />
        <rect x="36" y="32" width="21" height="21" rx="4" />
        <rect x="38" y="7" width="17.500" height="17.500" rx="4" transform="rotate(45 46.700 15.800)" />
      </NavItem>
      <NavItem label="设自选">
        <circle cx="33" cy="29" r="26.500" />
        <g fill="#666" stroke="none"><circle cx="21" cy="29" r="2.800" /><circle cx="33" cy="29" r="2.800" /><circle cx="45" cy="29" r="2.800" /></g>
      </NavItem>
    </div>
  );
}

function SystemNav() {
  return (
    <div className="flex h-[132px] shrink-0 items-center justify-between bg-white pr-[264px] pl-[244px]">
      <svg width="38" height="38" viewBox="0 0 38 38"><path d="M1 2.500H37M1 19H37M1 35.500H37" stroke="#9c9c9c" strokeWidth="3" /></svg>
      <svg width="38" height="38" viewBox="0 0 38 38" className="ml-[2px]"><rect x="2" y="2" width="34" height="34" rx="8" fill="none" stroke="#9c9c9c" strokeWidth="2.600" /></svg>
      <svg width="38" height="38" viewBox="0 0 38 38"><path d="M33 2.500Q35.500 1.500 35.500 4V34Q35.500 36.500 33 35.500L3 20.500Q1 19 3 17.500Z" fill="none" stroke="#9c9c9c" strokeWidth="2.400" /></svg>
    </div>
  );
}

export default function App() {
  return (
    <div className={`flex h-[2412px] w-[1080px] flex-col overflow-hidden bg-white ${FONT}`}>
      <StatusBar />
      <Header />
      <Quote />
      <Tabs />
      <Averages />
      <Charts />
      <AskBar />
      <BottomBar />
      <SystemNav />
    </div>
  );
}
